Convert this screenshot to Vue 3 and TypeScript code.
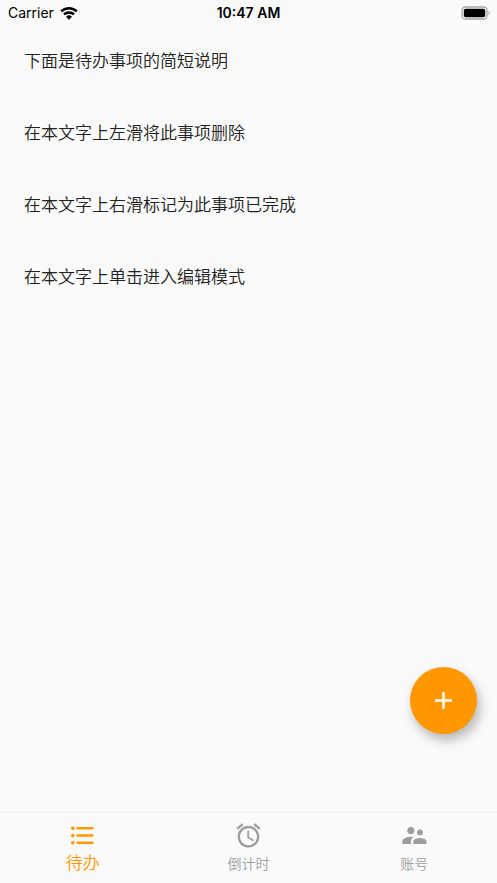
<script setup lang="ts">
import { ref } from 'vue'

interface Tab {
  id: string
  label: string
  icon: string
}

const todos = ref<string[]>([
  '下面是待办事项的简短说明',
  '在本文字上左滑将此事项删除',
  '在本文字上右滑标记为此事项已完成',
  '在本文字上单击进入编辑模式',
])

const tabs: Tab[] = [
  {
    id: 'todo',
    label: '待办',
    icon: 'M4 10.5c-.83 0-1.5.67-1.5 1.5s.67 1.5 1.5 1.5 1.5-.67 1.5-1.5-.67-1.5-1.5-1.5zm0-6c-.83 0-1.5.67-1.5 1.5S3.17 7.5 4 7.5 5.5 6.83 5.5 6 4.83 4.5 4 4.5zm0 12c-.83 0-1.5.68-1.5 1.5s.68 1.5 1.5 1.5 1.5-.68 1.5-1.5-.67-1.5-1.5-1.5zM7 19h14v-2H7v2zm0-6h14v-2H7v2zm0-8v2h14V5H7z',
  },
  {
    id: 'countdown',
    label: '倒计时',
    icon: 'M22 5.72l-4.6-3.86-1.29 1.53 4.6 3.86L22 5.72zM7.88 3.39L6.6 1.86 2 5.71l1.29 1.53 4.59-3.85zM12.5 8H11v6l4.75 2.85.75-1.23-4-2.37V8zM12 4c-4.97 0-9 4.03-9 9s4.02 9 9 9c4.97 0 9-4.03 9-9s-4.03-9-9-9zm0 16c-3.87 0-7-3.13-7-7s3.13-7 7-7 7 3.13 7 7-3.13 7-7 7z',
  },
  {
    id: 'account',
    label: '账号',
    icon: 'M16.5 12c1.38 0 2.49-1.12 2.49-2.5S17.88 7 16.5 7C15.12 7 14 8.12 14 9.5s1.12 2.5 2.5 2.5zM9 11c1.66 0 2.99-1.34 2.99-3S10.66 5 9 5C7.34 5 6 6.34 6 8s1.34 3 3 3zm7.5 3c-1.83 0-5.5.92-5.5 2.75V19h11v-2.25c0-1.83-3.67-2.75-5.5-2.75zM9 13c-2.33 0-7 1.17-7 3.5V19h7v-2.25c0-.85.33-2.34 2.37-3.47C10.5 13.1 9.66 13 9 13z',
  },
]

const current = ref('todo')
</script>

<template>
  <div class="screen">
    <header class="status">
      <div class="carrier">
        <span>Carrier</span>
        <svg class="wifi" viewBox="0 0 18 14" aria-hidden="true">
          <path d="M1.2 5.3a11.2 11.2 0 0 1 15.6 0M4 8.4a7.2 7.2 0 0 1 10 0" />
          <path class="solid" d="M9 13.7l-3-3a4.3 4.3 0 0 1 6 0z" />
        </svg>
      </div>
      <time class="clock">10:47 AM</time>
      <div class="power">
        <svg class="battery" viewBox="0 0 28 14" aria-hidden="true">
          <rect class="shell" x="1" y="1" width="25" height="12" rx="3.5" />
          <rect x="2.8" y="2.8" width="21.4" height="8.4" rx="1.8" />
          <path class="cap" d="M27.5 5a2.3 2.3 0 0 1 0 4z" />
        </svg>
      </div>
    </header>

    <main class="content">
      <ul class="todos">
        <li v-for="todo in todos" :key="todo" class="todo">{{ todo }}</li>
      </ul>
      <button class="add" type="button" aria-label="添加">
        <svg class="icon" viewBox="0 0 24 24" aria-hidden="true">
          <path d="M19 13h-6v6h-2v-6H5v-2h6V5h2v6h6v2z" />
        </svg>
      </button>
    </main>

    <nav class="tabs">
      <button
        v-for="tab in tabs"
        :key="tab.id"
        type="button"
        class="tab"
        :class="{ active: tab.id === current }"
        @click="current = tab.id"
      >
        <svg class="icon" viewBox="0 0 24 24" aria-hidden="true">
          <path :d="tab.icon" />
        </svg>
        <span class="label">{{ tab.label }}</span>
      </button>
    </nav>
  </div>
</template>

<style>
body {
  background: #fafafa;
}
</style>

<style scoped>
.screen {
  display: flex;
  flex-direction: column;
  min-height: 100vh;
  background: #fafafa;
  color: #212121;
  font-family: Inter, 'Noto Sans CJK SC', sans-serif;
}

.status {
  display: grid;
  grid-template-columns: 1fr auto 1fr;
  align-items: center;
  height: 24px;
  padding: 1px 8px 0;
  color: #000;
  font-size: 14px;
  line-height: 24px;
}

.carrier {
  display: flex;
  align-items: center;
  gap: 6px;
}

.wifi {
  width: 18px;
  height: 14px;
  fill: none;
  stroke: #000;
  stroke-width: 2.5;
}

.wifi .solid {
  fill: #000;
  stroke: none;
}

.clock {
  font-weight: 600;
}

.power {
  display: flex;
  justify-content: flex-end;
}

.battery {
  width: 28px;
  height: 14px;
  overflow: visible;
}

.shell {
  fill: none;
  stroke: #a6a6a6;
  stroke-width: 1.3;
}

.cap {
  fill: #a6a6a6;
}

.content {
  display: flex;
  flex: 1;
  flex-direction: column;
  justify-content: space-between;
}

.todos {
  margin: 0;
  padding: 0;
  list-style: none;
}

.todo {
  padding: 24px;
  font-size: 17px;
  font-weight: 350;
  line-height: 24px;
}

.add {
  display: flex;
  align-items: center;
  justify-content: center;
  align-self: flex-end;
  width: 67px;
  height: 67px;
  margin: 0 20px 78px;
  padding: 0;
  border: 0;
  border-radius: 50%;
  background: #ff9800;
  color: #fff;
  box-shadow: 3px 6px 12px rgba(0, 0, 0, 0.28);
}

.icon {
  width: 29px;
  height: 29px;
  fill: currentColor;
}

.tabs {
  display: grid;
  grid-template-columns: repeat(3, 1fr);
  border-top: 1px solid #f0f0f0;
}

.tab {
  display: flex;
  flex-direction: column;
  align-items: center;
  height: 70px;
  padding: 8px 0 0;
  border: 0;
  background: none;
  color: #9e9e9e;
  font-family: inherit;
  font-size: 14px;
  font-weight: 350;
  line-height: 28px;
}

.tab.active {
  color: #ff9800;
  font-size: 17px;
  line-height: 26px;
}
</style>
